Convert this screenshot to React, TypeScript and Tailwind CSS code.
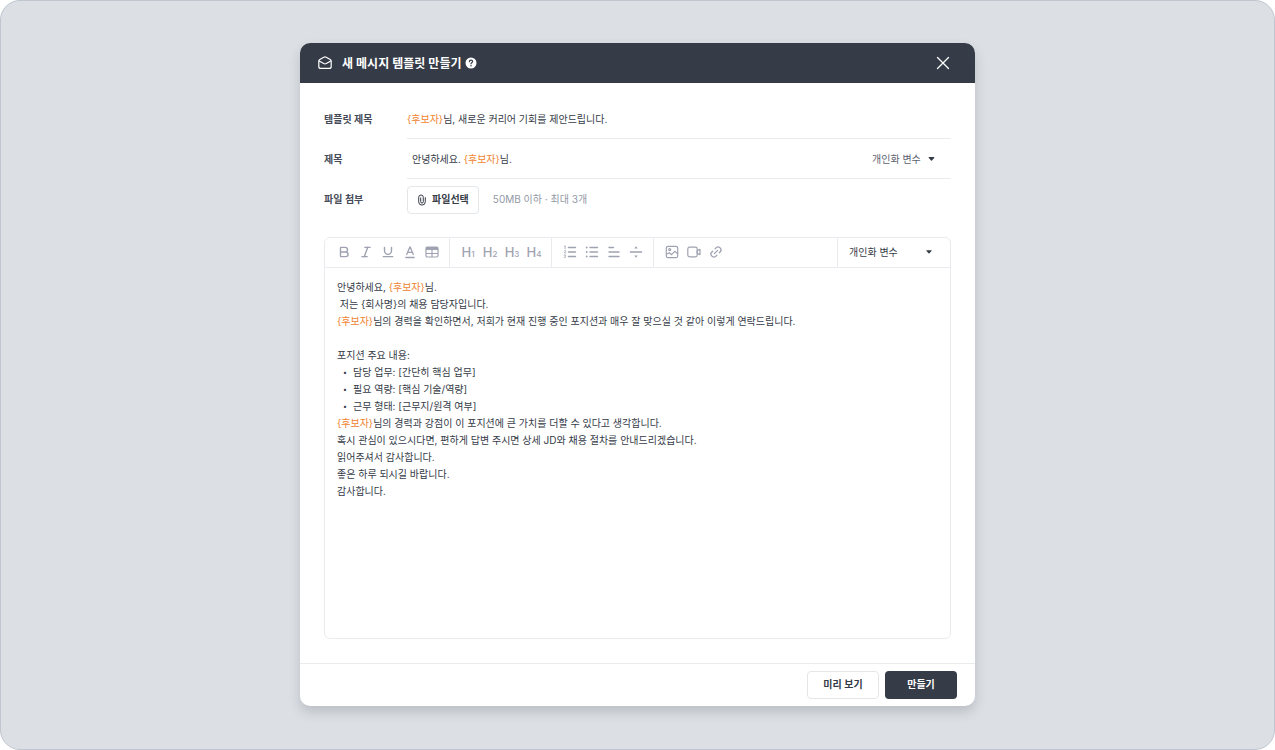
import { useRef } from 'react';
import type { ReactNode } from 'react';
import { Bold, Italic, Link2, Underline, X } from 'lucide-react';

interface IconButtonProps {
  label: string;
  children: ReactNode;
}

interface VariableSelectProps {
  className: string;
  arrowClassName: string;
}

const headings = [1, 2, 3, 4];

const jobDetails = ['담당 업무: [간단히 핵심 업무]', '필요 역량: [핵심 기술/역량]', '근무 형태: [근무지/원격 여부]'];

function Candidate() {
  return <span className="text-[#f0832f]">{'{후보자}'}</span>;
}

function IconButton({ label, children }: IconButtonProps) {
  return (
    <button type="button" aria-label={label} className="flex h-6 w-[22px] items-center justify-center hover:text-[#5b6170]">
      {children}
    </button>
  );
}

function ToolGroup({ children }: { children: ReactNode }) {
  return <div className="flex items-center border-r border-[#e9ebee] pl-[7px] pr-1.5">{children}</div>;
}

function VariableSelect({ className, arrowClassName }: VariableSelectProps) {
  return (
    <div className="relative flex shrink-0 items-center">
      <select aria-label="개인화 변수" className={`appearance-none bg-transparent outline-none ${className}`}>
        <option>개인화 변수</option>
      </select>
      <svg viewBox="0 0 8 5" className={`pointer-events-none absolute ${arrowClassName}`} fill="currentColor">
        <path d="M1.2 0h5.6c.7 0 1 .8.5 1.3L4.6 4.3a.8.8 0 0 1-1.2 0L.7 1.3C.2.8.5 0 1.2 0z" />
      </svg>
    </div>
  );
}

function MailOpenIcon() {
  return (
    <svg viewBox="0 0 14 14" className="size-3.5" fill="none" stroke="currentColor" strokeWidth="1.2" strokeLinejoin="round" strokeLinecap="round">
      <path d="M.8 5.2c0-.8.4-1.3 1-1.7L5.8 1.2c.8-.4 1.6-.4 2.4 0l4 2.3c.6.4 1 .9 1 1.7v5.2c0 1.2-.9 2-2 2H2.800c-1.100 0-2-.8-2-2z" />
      <path d="M1.200 5 5.700 7.500c.8.4 1.800.4 2.600 0L12.800 5" />
    </svg>
  );
}

function HelpIcon() {
  return (
    <svg viewBox="0 0 12 12" className="size-3" fill="none">
      <circle cx="6" cy="6" r="5.5" fill="#fff" />
      <path d="M4.4 4.7c0-.9.7-1.5 1.6-1.5s1.6.6 1.6 1.4c0 1-1.6 1.2-1.6 2.2" stroke="#353b47" strokeWidth="1.2" strokeLinecap="round" />
      <circle cx="6" cy="8.7" r=".75" fill="#353b47" />
    </svg>
  );
}

function ClipIcon() {
  return (
    <svg viewBox="0 0 10 12" className="h-3 w-2.5" fill="none" stroke="currentColor" strokeWidth="1" strokeLinecap="round">
      <path d="M8.3 3.6v4.2a3.3 3.3 0 0 1-6.6 0V3.3a2.3 2.3 0 0 1 4.6 0v4.4a1.3 1.3 0 0 1-2.6 0V3.8" />
    </svg>
  );
}

function TextColorIcon() {
  return (
    <svg viewBox="0 0 14 14" className="size-3.5" fill="none" stroke="currentColor" strokeWidth="1.3" strokeLinecap="round" strokeLinejoin="round">
      <path d="M3.7 9.5 7 1.8l3.3 7.7M4.7 7.3h4.6M2.8 12.5h8.4" />
    </svg>
  );
}

function TableIcon() {
  return (
    <svg viewBox="0 0 14 12" className="h-3 w-3.5" fill="none" stroke="currentColor" strokeWidth="1.2">
      <rect x="1" y="1" width="12" height="10" rx="1.2" />
      <path d="M1 2.5h12" strokeWidth="3" />
      <path d="M1 7.5h12M7 4v7" />
    </svg>
  );
}

function OrderedListIcon() {
  return (
    <svg viewBox="0 0 14 14" className="size-3.5" fill="none" stroke="currentColor" strokeLinecap="round" strokeLinejoin="round">
      <path d="M5.5 2.5h7M5.5 7h7M5.5 11.5h7" strokeWidth="1.4" />
      <path d="M1.4 1.2l.8-.4v3M1.2 5.9c.4-.7 1.6-.5 1.5.2 0 .6-1 1-1.5 1.8h1.6M1.2 10.1h1.5l-.8 1.1c1.3 0 1.2 1.9-.7 1.5" strokeWidth=".8" />
    </svg>
  );
}

function BulletListIcon() {
  return (
    <svg viewBox="0 0 14 14" className="size-3.5" fill="none" stroke="currentColor" strokeWidth="1.4" strokeLinecap="round">
      <path d="M5 2.5h7.5M5 7h7.5M5 11.5h7.5" />
      <path d="M1.700 2.5h.01M1.700 7h.01M1.700 11.5h.01" strokeWidth="1.9" />
    </svg>
  );
}

function AlignIcon() {
  return (
    <svg viewBox="0 0 14 14" className="size-3.5" fill="none" stroke="currentColor" strokeWidth="1.4" strokeLinecap="round">
      <path d="M2 2.5h4.5M2 7h10M2 11.5h10" />
    </svg>
  );
}

function DividerIcon() {
  return (
    <svg viewBox="0 0 14 14" className="size-3.5" fill="currentColor">
      <path d="M1.4 6.3h11.2a.7.7 0 0 1 0 1.4H1.4a.7.7 0 0 1 0-1.4z" />
      <path d="M5.2 3.5 7 1.3l1.8 2.2zM5.2 10.5 7 12.7l1.8-2.2z" />
    </svg>
  );
}

function ImageIcon() {
  return (
    <svg viewBox="0 0 14 14" className="size-3.5" fill="none" stroke="currentColor" strokeWidth="1.2" strokeLinejoin="round">
      <rect x="1.3" y="1.3" width="11.4" height="11.4" rx="1.8" />
      <circle cx="4.7" cy="4.6" r="1" />
      <path d="M1.5 9.3 4.4 7.7l2.2 2 3.2-3.4 2.9 2.6" />
    </svg>
  );
}

function VideoIcon() {
  return (
    <svg viewBox="0 0 14 14" className="size-3.5" fill="none" stroke="currentColor" strokeWidth="1.2" strokeLinejoin="round">
      <rect x=".8" y="2.2" width="9.4" height="9.6" rx="1.8" />
      <path d="M10.2 5.6 13 4.4v5.2l-2.8-1.2z" />
    </svg>
  );
}

export default function App() {
  const fileInput = useRef<HTMLInputElement>(null);

  return (
    <main className="flex min-h-screen items-center justify-center rounded-[20px] border border-[#bfc6cf] bg-[#dce0e5] px-4 pb-[18px] pt-4 font-['Inter','Noto_Sans_CJK_KR',sans-serif] text-[10px] text-[#353b47]">
      <section
        role="dialog"
        aria-labelledby="dialog-title"
        className="w-full max-w-[675px] overflow-hidden rounded-[10px] bg-white shadow-[0_6px_12px_rgba(53,59,71,0.2)]"
      >
        <header className="flex h-10 items-center bg-[#353b47] pl-[18px] pr-[21px] text-white">
          <MailOpenIcon />
          <h1 id="dialog-title" className="ml-2.5 pt-0.5 text-[12px] font-semibold">
            새 메시지 템플릿 만들기
          </h1>
          <button type="button" aria-label="도움말" className="ml-1">
            <HelpIcon />
          </button>
          <button type="button" aria-label="닫기" className="ml-auto">
            <X className="size-[22px]" strokeWidth={1.4} />
          </button>
        </header>

        <form className="px-6 pb-6 pt-4" onSubmit={(e) => e.preventDefault()}>
          {/* Message fields */}
          <div className="flex h-10 items-center">
            <span id="template-label" className="w-[83px] shrink-0 pt-0.5 font-semibold text-[#454b58]">
              템플릿 제목
            </span>
            <div className="flex h-full flex-1 items-center border-b border-[#e9ebee] pt-0.5">
              <div role="textbox" aria-labelledby="template-label" contentEditable suppressContentEditableWarning className="flex-1 outline-none">
                <Candidate />
                님, 새로운 커리어 기회를 제안드립니다.
              </div>
            </div>
          </div>
          <div className="flex h-10 items-center">
            <span id="subject-label" className="w-[83px] shrink-0 pt-0.5 font-semibold text-[#454b58]">
              제목
            </span>
            <div className="flex h-full flex-1 items-center border-b border-[#e9ebee] pl-[5px] pt-0.5">
              <div role="textbox" aria-labelledby="subject-label" contentEditable suppressContentEditableWarning className="flex-1 outline-none">
                안녕하세요. <Candidate />
                님.
              </div>
              <VariableSelect className="h-6 w-[79px] text-[#5b6170]" arrowClassName="right-4 h-1 w-[7px]" />
            </div>
          </div>
          <div className="flex h-10 items-center pt-0.5">
            <label htmlFor="attachment" className="w-[83px] shrink-0 font-semibold text-[#454b58]">
              파일 첨부
            </label>
            <input ref={fileInput} id="attachment" type="file" multiple className="hidden" />
            <button
              type="button"
              onClick={() => fileInput.current?.click()}
              className="flex h-7 items-center gap-[5px] rounded border border-[#e4e7ea] px-[9px] font-semibold"
            >
              <ClipIcon />
              파일선택
            </button>
            <span className="ml-3.5 text-[#9299a6]">50MB 이하 · 최대 3개</span>
          </div>

          {/* Editor */}
          <div className="mt-[18px] rounded-md border border-[#e9ebee]">
            <div className="flex h-[30px] border-b border-[#e9ebee] pl-px text-[#9fa3b1]">
              <ToolGroup>
                <IconButton label="굵게">
                  <Bold className="size-3.5" strokeWidth={2.4} />
                </IconButton>
                <IconButton label="기울임">
                  <Italic className="size-3.5" strokeWidth={2.4} />
                </IconButton>
                <IconButton label="밑줄">
                  <Underline className="size-3.5" strokeWidth={2.4} />
                </IconButton>
                <IconButton label="글자 색">
                  <TextColorIcon />
                </IconButton>
                <IconButton label="표">
                  <TableIcon />
                </IconButton>
              </ToolGroup>
              <ToolGroup>
                {headings.map((level) => (
                  <IconButton key={level} label={`제목 ${level}`}>
                    <span className="flex items-baseline text-[13px] font-medium leading-none">
                      H<span className="text-[8px]">{level}</span>
                    </span>
                  </IconButton>
                ))}
              </ToolGroup>
              <ToolGroup>
                <IconButton label="번호 목록">
                  <OrderedListIcon />
                </IconButton>
                <IconButton label="글머리 목록">
                  <BulletListIcon />
                </IconButton>
                <IconButton label="정렬">
                  <AlignIcon />
                </IconButton>
                <IconButton label="구분선">
                  <DividerIcon />
                </IconButton>
              </ToolGroup>
              <div className="flex items-center pl-[7px]">
                <IconButton label="이미지">
                  <ImageIcon />
                </IconButton>
                <IconButton label="동영상">
                  <VideoIcon />
                </IconButton>
                <IconButton label="링크">
                  <Link2 className="size-3.5 -rotate-45" strokeWidth={2.2} />
                </IconButton>
              </div>
              <div className="ml-auto flex border-l border-[#e9ebee] text-[#353b47]">
                <VariableSelect className="h-7 w-28 pl-[11px]" arrowClassName="right-[18px] h-1 w-1.5" />
              </div>
            </div>

            <div
              role="textbox"
              aria-multiline="true"
              aria-label="내용"
              contentEditable
              suppressContentEditableWarning
              className="min-h-[370px] px-3 py-[11px] leading-[17px] outline-none"
            >
              <p>
                안녕하세요, <Candidate />
                님.
              </p>
              <p className="whitespace-pre-wrap">{' 저는 {회사명}의 채용 담당자입니다.'}</p>
              <p>
                <Candidate />
                님의 경력을 확인하면서, 저희가 현재 진행 중인 포지션과 매우 잘 맞으실 것 같아 이렇게 연락드립니다.
              </p>
              <br />
              <p>포지션 주요 내용:</p>
              <ul>
                {jobDetails.map((detail) => (
                  <li key={detail} className="flex before:w-4 before:text-center before:text-[7px] before:content-['•']">
                    {detail}
                  </li>
                ))}
              </ul>
              <p>
                <Candidate />
                님의 경력과 강점이 이 포지션에 큰 가치를 더할 수 있다고 생각합니다.
              </p>
              <p>혹시 관심이 있으시다면, 편하게 답변 주시면 상세 JD와 채용 절차를 안내드리겠습니다.</p>
              <p>읽어주셔서 감사합니다.</p>
              <p>좋은 하루 되시길 바랍니다.</p>
              <p>감사합니다.</p>
            </div>
          </div>
        </form>

        <footer className="flex justify-end gap-1.5 border-t border-[#e9ebee] px-[18px] py-[7px] font-semibold">
          <button type="button" className="h-7 w-[72px] rounded border border-[#e4e7ea]">
            미리 보기
          </button>
          <button type="submit" className="h-7 w-[72px] rounded bg-[#353b47] text-white">
            만들기
          </button>
        </footer>
      </section>
    </main>
  );
}
